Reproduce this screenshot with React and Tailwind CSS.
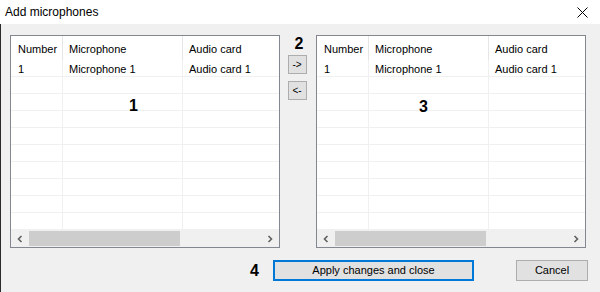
import React from "react";

const rows = Array.from({ length: 10 });

function List({ label, labelPos }) {
  return (
    <div className="relative w-[270px] h-[213px] border border-[#828790] bg-white flex flex-col">
      <div className="flex h-[24px] items-center">
        <div className="w-[52px] h-full border-r border-[#e5e5e5] pl-[7px] pt-[2px] flex items-center">Number</div>
        <div className="w-[120px] h-full border-r border-[#e5e5e5] pl-[6px] pt-[2px] flex items-center">Microphone</div>
        <div className="flex-1 h-full pl-[6px] pt-[2px] flex items-center">Audio card</div>
      </div>
      {rows.map((_, i) => (
        <div key={i} className="flex h-[17px] border-b border-[#f0f0f0]">
          <div className="w-[52px] h-full border-r border-[#f0f0f0] pl-[7px] pt-[2px] flex items-center">{i === 0 ? "1" : ""}</div>
          <div className="w-[120px] h-full border-r border-[#f0f0f0] pl-[6px] pt-[2px] flex items-center">{i === 0 ? "Microphone 1" : ""}</div>
          <div className="flex-1 h-full pl-[6px] pt-[2px] flex items-center">{i === 0 ? "Audio card 1" : ""}</div>
        </div>
      ))}
      <div className="flex h-[17px] bg-[#f0f0f0] items-center">
        <div className="w-[18px] h-full flex items-center justify-center">
          <svg width="8" height="8" viewBox="0 0 8 8">
            <path d="M5.5 1 L2.5 4 L5.5 7" stroke="#606060" strokeWidth="1.6" fill="none" />
          </svg>
        </div>
        <div className="w-[151px] h-[15px] bg-[#cdcdcd]" />
        <div className="flex-1" />
        <div className="w-[18px] h-full flex items-center justify-center">
          <svg width="8" height="8" viewBox="0 0 8 8">
            <path d="M2.5 1 L5.5 4 L2.5 7" stroke="#606060" strokeWidth="1.6" fill="none" />
          </svg>
        </div>
      </div>
      <div className={"absolute text-[16px] font-bold leading-none text-black " + labelPos}>{label}</div>
    </div>
  );
}

export default function App() {
  return (
    <div
      className="w-[600px] h-[292px] bg-[#f0f0f0] flex flex-col text-[11px] text-black overflow-hidden"
      style={{ fontFamily: '"Liberation Sans", Arial, sans-serif' }}
    >
      <div className="h-[24px] bg-white flex items-center justify-between pl-[5px] pr-[12px]">
        <span className="text-[12px]">Add microphones</span>
        <svg width="11" height="11" viewBox="0 0 11 11">
          <path d="M0.5 0.5 L10.5 10.5 M10.5 0.5 L0.5 10.5" stroke="#000" strokeWidth="1" fill="none" />
        </svg>
      </div>
      <div className="flex-1 border-l border-[#2b2b2b] pl-[9px] pt-[11px] flex flex-col">
        <div className="flex">
          <List label="1" labelPos="left-[118px] top-[62px]" />
          <div className="w-[36px] flex flex-col items-center">
            <div className="text-[16px] font-bold leading-none mt-[1px] h-[19px] pl-[2px]">2</div>
            <div className="w-[19px] h-[19px] border border-[#adadad] bg-[#e1e1e1] flex items-center justify-center text-[10px] leading-none ml-[-2px]">-&gt;</div>
            <div className="w-[19px] h-[19px] border border-[#adadad] bg-[#e1e1e1] flex items-center justify-center text-[10px] leading-none mt-[7px] ml-[-2px]">&lt;-</div>
          </div>
          <List label="3" labelPos="left-[102px] top-[63px]" />
        </div>
        <div className="flex items-center mt-[12px] h-[21px]">
          <div className="w-[240px]" />
          <div className="text-[16px] font-bold leading-none w-[23px]">4</div>
          <div className="w-[201px] h-[21px] border-2 border-[#0078d7] bg-[#e1e1e1] flex items-center justify-center">
            Apply changes and close
          </div>
          <div className="w-[42px]" />
          <div className="w-[72px] h-[21px] border border-[#adadad] bg-[#e1e1e1] flex items-center justify-center">
            Cancel
          </div>
        </div>
      </div>
    </div>
  );
}
